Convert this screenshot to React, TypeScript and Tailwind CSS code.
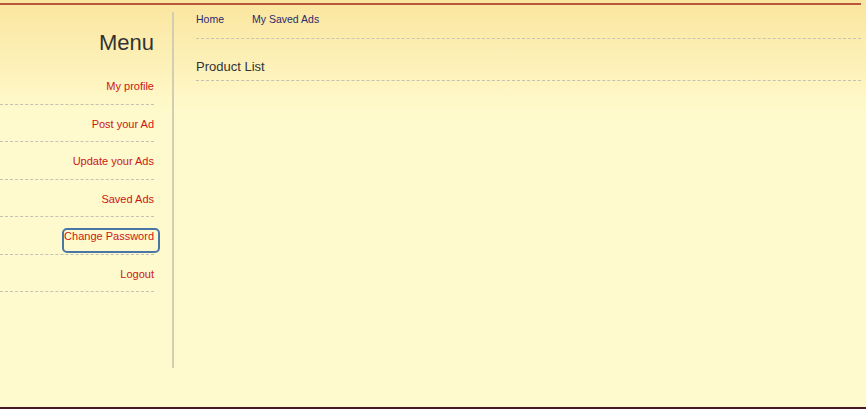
export default function App() {
  const items = ['My profile', 'Post your Ad', 'Update your Ads', 'Saved Ads', 'Change Password', 'Logout'];

  return (
    <div className="relative h-[409px] w-full overflow-hidden bg-[linear-gradient(to_bottom,#fae59e_0px,#fffacd_115px)] font-['Liberation_Sans',Arial,sans-serif]">
      {/* top rule */}
      <div className="pt-[3px]">
        <div className="h-[2px] w-[861px] bg-[#b9573b]" />
      </div>

      <div className="flex">
        {/* Sidebar */}
        <aside className="w-[172px] shrink-0 pt-[25px]">
          <h2 className="h-[26px] pr-[18px] text-right text-[22px] leading-[26px] text-[#333333]">Menu</h2>
          <ul className="mt-[11px] mr-[18px]">
            {items.map((item) => (
              <li
                key={item}
                className="box-border h-[37.5px] border-b border-dashed border-[#c4c2b4] pt-[12px] text-right text-[11px] leading-[14px]"
              >
                {item === 'Change Password' ? (
                  <a className="relative text-[#cc1515]">
                    {item}
                    <span className="absolute -top-[2px] -bottom-[11px] -left-[2px] -right-[6px] rounded-[5px] border-2 border-[#4a76a6]" />
                  </a>
                ) : (
                  <a className="text-[#cc1515]">{item}</a>
                )}
              </li>
            ))}
          </ul>
        </aside>

        {/* Divider */}
        <div className="mt-[7px] h-[356px] w-[2px] shrink-0 bg-[#d3ceb2]" />

        {/* Main */}
        <main className="flex-1 pl-[22px] pr-[5px]">
          <nav className="box-border flex h-[34px] gap-[28px] border-b border-dashed border-[#c9c6b8] pt-[7px] text-[10.5px] leading-[14px] text-[#2a2a6e]">
            <a>Home</a>
            <a>My Saved Ads</a>
          </nav>
          <h3 className="mt-[20px] box-border h-[22px] border-b border-dashed border-[#c4c2b4] text-[13px] leading-[16px] text-[#333333]">
            Product List
          </h3>
        </main>
      </div>

      {/* bottom rule */}
      <div className="absolute bottom-0 left-0 h-[2px] w-full bg-[#4a1822]" />
    </div>
  );
}
